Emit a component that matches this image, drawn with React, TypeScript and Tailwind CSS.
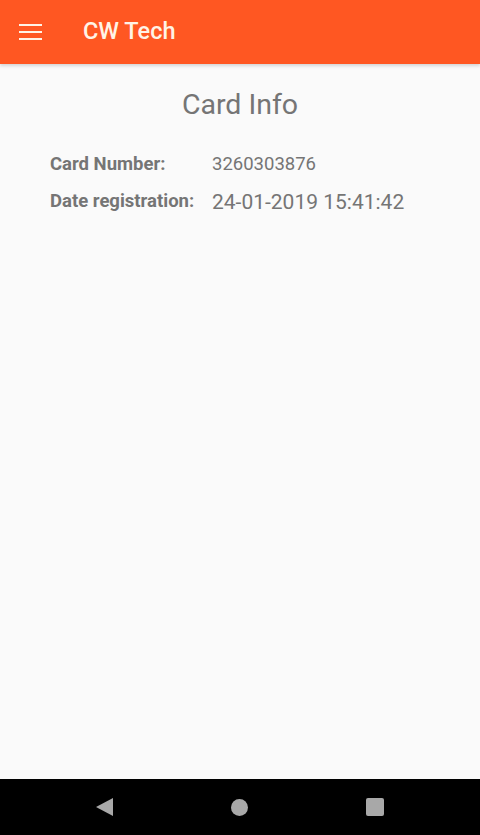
export default function App() {
  return (
    <div className="flex h-[835px] w-[480px] flex-col bg-[#fafafa] font-['Roboto',sans-serif]">
      <header className="flex h-16 shrink-0 items-center bg-[#ff5722] shadow-[0_2px_3px_rgba(0,0,0,0.15)]">
        <div className="ml-[19px] flex w-[23px] flex-col gap-[5px]">
          <span className="h-[2px] bg-[#fff3e6]" />
          <span className="h-[2px] bg-[#fff3e6]" />
          <span className="h-[2px] bg-[#fff3e6]" />
        </div>
        <h1 className="ml-[41px] text-[23.5px] font-medium text-[#fff3e6]">CW Tech</h1>
      </header>

      <main className="flex-1">
        <h2 className="mt-[20px] text-center text-[28.5px] text-[#757575]">Card Info</h2>
        <div className="mt-[24px] grid grid-cols-[162px_1fr] items-center gap-y-[8px] pl-[50px] text-[#757575]">
          <span className="text-[18.5px] font-bold">Card Number:</span>
          <span className="text-[18.5px]">3260303876</span>
          <span className="text-[18.5px] font-bold">Date registration:</span>
          <span className="text-[21px]">24-01-2019 15:41:42</span>
        </div>
      </main>

      <nav className="flex h-[56px] shrink-0 items-center justify-center gap-[118px] bg-black">
        <svg width="17" height="18" viewBox="0 0 17 18">
          <polygon points="17,0 17,18 0,9" fill="#a8a8a8" />
        </svg>
        <span className="h-[17px] w-[17px] rounded-full bg-[#a8a8a8]" />
        <span className="h-[18px] w-[18px] rounded-[2px] bg-[#a8a8a8]" />
      </nav>
    </div>
  );
}
